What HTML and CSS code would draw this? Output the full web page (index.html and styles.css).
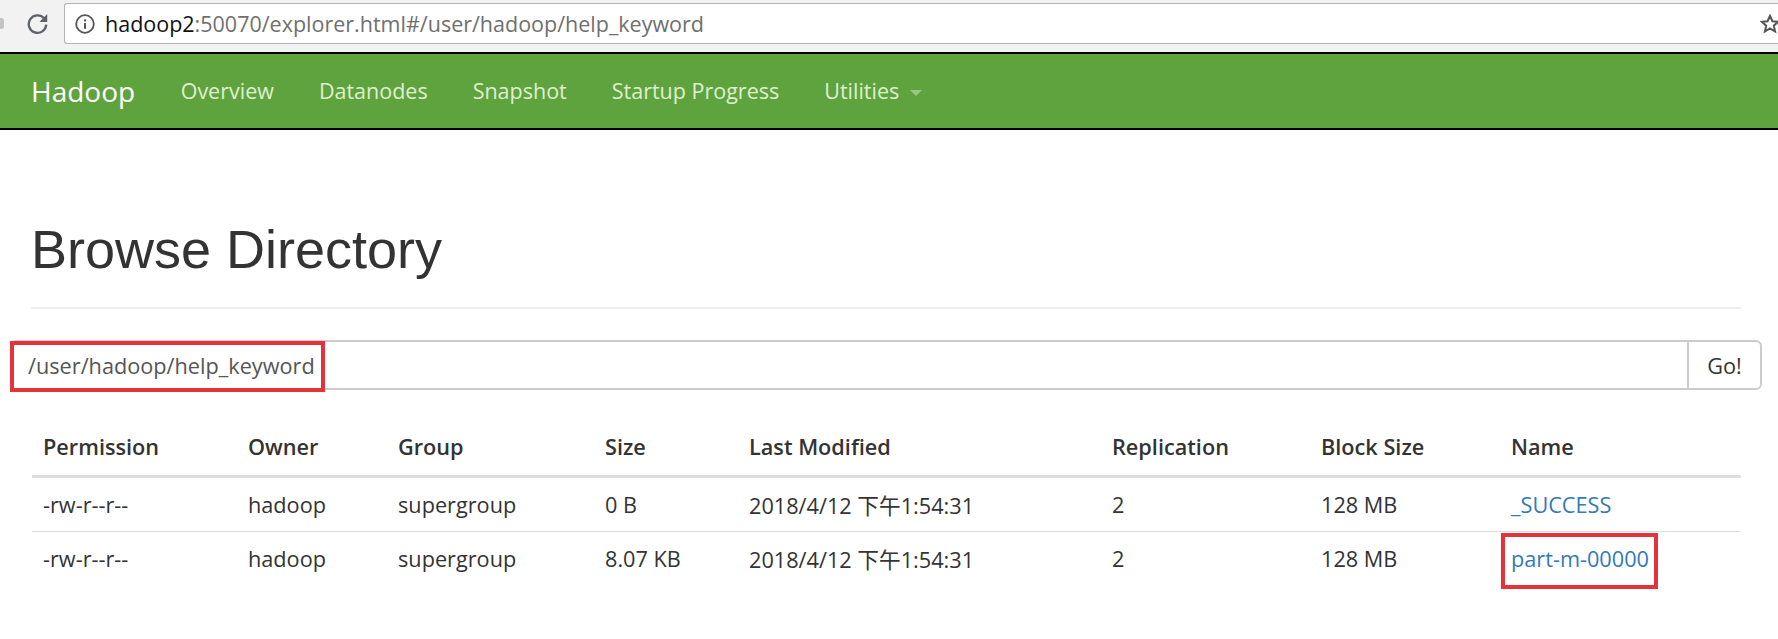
FILE: index.html
```html
<!DOCTYPE html>
<html lang="en">
<head>
<meta charset="utf-8">
<title>Browsing HDFS</title>
<link rel="stylesheet" href="styles.css">
</head>
<body>
<div class="toolbar">
  <span class="back-edge"></span>
  <svg class="reload" viewBox="0 0 20 20" width="23" height="23"><path d="M15.6 5.400A7.600 7.600 0 1 0 17.600 11" fill="none" stroke="#5f6368" stroke-width="2"/><path d="M18.500 1.800v6.800h-6.800z" fill="#5f6368"/></svg>
  <div class="omnibox">
    <svg class="info" viewBox="0 0 20 20" width="20" height="20"><circle cx="10" cy="10" r="8.800" fill="none" stroke="#555" stroke-width="1.800"/><rect x="9" y="9" width="2" height="5.800" fill="#555"/><rect x="9" y="5.400" width="2" height="2" fill="#555"/></svg>
    <span class="host">hadoop2</span><span class="url-rest">:50070/explorer.html#/user/hadoop/help_keyword</span>
    <svg class="star" viewBox="0 0 20 20" width="20" height="20"><path d="M10 1.800l2.400 5.400 5.800.6-4.400 3.900 1.300 5.800L10 14.500l-5.100 3 1.300-5.800L1.800 7.800l5.800-.6z" fill="none" stroke="#555" stroke-width="2"/></svg>
  </div>
</div>
<nav class="navbar">
  <a class="brand">Hadoop</a>
  <a class="nav-link">Overview</a>
  <a class="nav-link">Datanodes</a>
  <a class="nav-link">Snapshot</a>
  <a class="nav-link">Startup Progress</a>
  <a class="nav-link">Utilities<span class="caret"></span></a>
</nav>
<main class="container">
  <h1 class="title">Browse Directory</h1>
  <div class="input-group">
    <div class="path">/user/hadoop/help_keyword</div>
    <div class="go">Go!</div>
    <span class="mark mark-path"></span>
  </div>
  <table class="listing">
    <colgroup>
      <col class="c1"><col class="c2"><col class="c3"><col class="c4"><col class="c5"><col class="c6"><col class="c7"><col class="c8">
    </colgroup>
    <thead>
      <tr><th>Permission</th><th>Owner</th><th>Group</th><th>Size</th><th>Last Modified</th><th>Replication</th><th>Block Size</th><th>Name</th></tr>
    </thead>
    <tbody>
      <tr><td>-rw-r--r--</td><td>hadoop</td><td>supergroup</td><td>0 B</td><td>2018/4/12 下午1:54:31</td><td>2</td><td>128 MB</td><td><a class="file">_SUCCESS</a></td></tr>
      <tr><td>-rw-r--r--</td><td>hadoop</td><td>supergroup</td><td>8.07 KB</td><td>2018/4/12 下午1:54:31</td><td>2</td><td>128 MB</td><td class="marked"><a class="file">part-m-00000</a><span class="mark mark-file"></span></td></tr>
    </tbody>
  </table>
</main>
</body>
</html>
```
FILE: styles.css
```css
* { box-sizing: border-box; }
html, body { margin: 0; padding: 0; background: #fff; overflow: hidden; }
body { font-family: "Open Sans", "Noto Sans CJK SC", sans-serif; color: #333; height: 639px; }

.toolbar { height: 52px; background: #f2f2f2; display: flex; align-items: center; padding: 3px 0 8px 0; }
.back-edge { flex: none; width: 4px; height: 11px; background: #c4c4c4; border-radius: 0 3px 3px 0; margin-right: 22px; }
.reload { flex: none; margin-right: 15px; }
.omnibox { flex: 1; min-width: 0; height: 41px; background: #fff; border: 1px solid #b4b4b4; border-right: 0; border-radius: 3px 0 0 3px; display: flex; align-items: center; padding-left: 10px; font-size: 21.500px; white-space: nowrap; }
.info { flex: none; margin-right: 10px; }
.host { color: #111; }
.url-rest { color: #6f6f6f; }
.star { flex: none; margin-left: auto; margin-right: -2px; }

.navbar { height: 78px; background: #5fa33e; border-top: 2px solid #000; border-bottom: 2px solid #000; display: flex; align-items: center; padding: 0 0 1px 31px; }
.brand { font-size: 28px; color: #fff; margin-right: 45.500px; }
.nav-link { font-size: 21.500px; color: #dff0d0; margin-right: 45px; }
.caret { display: inline-block; margin-left: 11px; vertical-align: middle; border-top: 6px solid #9cc487; border-left: 6px solid transparent; border-right: 6px solid transparent; }

.container { margin-left: 32px; width: 1709px; }
.title { font-family: "Liberation Sans", sans-serif; font-weight: 400; font-size: 54px; line-height: 60px; margin: 0 0 0 -1px; padding: 89px 0 28px; border-bottom: 2px solid #eee; color: #333; }

.input-group { position: relative; display: flex; height: 50px; margin: 31px -21px 0 -22px; border: 2px solid #ccc; border-radius: 6px; font-size: 21.700px; }
.path { flex: 1; padding-left: 16px; line-height: 48px; color: #555; }
.go { width: 73px; border-left: 2px solid #ccc; text-align: center; line-height: 48px; color: #333; }
.mark { position: absolute; border: 4px solid #e5333c; pointer-events: none; }
.mark-path { left: -2px; top: -1px; width: 315px; height: 51px; }

.listing { width: 100%; table-layout: fixed; border-collapse: collapse; margin-top: 28px; font-size: 21.700px; }
.c1 { width: 204px; } .c2 { width: 150px; } .c3 { width: 207px; } .c4 { width: 144px; }
.c5 { width: 363px; } .c6 { width: 209px; } .c7 { width: 190px; } .c8 { width: 242px; }
.listing th { text-align: left; font-weight: 600; padding: 0 12px; height: 58px; border-bottom: 3px solid #ddd; color: #333; }
.listing td { padding: 0 12px; height: 55px; border-bottom: 1px solid #ddd; color: #333; white-space: nowrap; }
.listing th:first-child, .listing td:first-child { padding-left: 11px; }
.listing tbody tr:last-child td { border-bottom: 0; }
.marked { position: relative; }
.file { color: #337ab7; }
.mark-file { left: 2px; top: 1px; width: 157px; height: 56px; }
```
